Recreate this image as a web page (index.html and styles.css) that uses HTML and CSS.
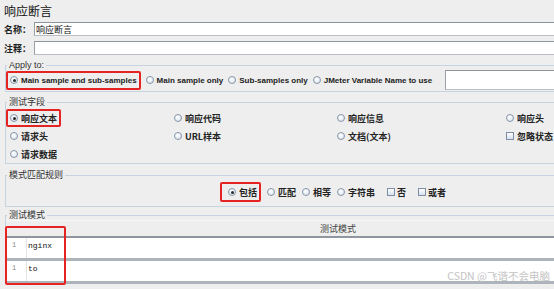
FILE: index.html
```html
<!DOCTYPE html>
<html lang="zh">
<head>
<meta charset="utf-8">
<link rel="stylesheet" href="styles.css">
</head>
<body>
<div class="panel">
  <div class="title">响应断言</div>
  <div class="field first"><span class="flabel">名称：</span><div class="input"><span class="itext">响应断言</span></div></div>
  <div class="field second"><span class="flabel">注释：</span><div class="input"></div></div>

  <fieldset class="group g-apply">
    <legend>Apply to:</legend>
    <div class="apply-row">
      <span class="hl hl-apply"><span class="radio on"></span><span class="lbl en">Main sample and sub-samples</span></span>
      <span class="opt"><span class="radio"></span><span class="lbl en">Main sample only</span></span>
      <span class="opt"><span class="radio"></span><span class="lbl en">Sub-samples only</span></span>
      <span class="opt"><span class="radio"></span><span class="lbl en">JMeter Variable Name to use</span></span>
      <div class="input var"></div>
    </div>
  </fieldset>

  <fieldset class="group g-field">
    <legend>测试字段</legend>
    <div class="field-grid">
      <div class="cell c1"><span class="hl hl-field"><span class="radio on"></span><span class="lbl">响应文本</span></span></div>
      <div class="cell"><span class="radio"></span><span class="lbl">响应代码</span></div>
      <div class="cell"><span class="radio"></span><span class="lbl">响应信息</span></div>
      <div class="cell"><span class="radio"></span><span class="lbl">响应头</span></div>
      <div class="cell c1p"><span class="radio"></span><span class="lbl">请求头</span></div>
      <div class="cell"><span class="radio"></span><span class="lbl">URL样本</span></div>
      <div class="cell"><span class="radio"></span><span class="lbl">文档(文本)</span></div>
      <div class="cell"><span class="check"></span><span class="lbl">忽略状态</span></div>
      <div class="cell c1p"><span class="radio"></span><span class="lbl">请求数据</span></div>
    </div>
  </fieldset>

  <fieldset class="group g-rule">
    <legend>模式匹配规则</legend>
    <div class="rule-row">
      <span class="hl hl-rule"><span class="radio on"></span><span class="lbl">包括</span></span>
      <span class="opt"><span class="radio"></span><span class="lbl">匹配</span></span>
      <span class="opt"><span class="radio"></span><span class="lbl">相等</span></span>
      <span class="opt"><span class="radio"></span><span class="lbl">字符串</span></span>
      <span class="opt ck"><span class="check"></span><span class="lbl">否</span></span>
      <span class="opt ck"><span class="check"></span><span class="lbl">或者</span></span>
    </div>
  </fieldset>

  <fieldset class="group g-pattern">
    <legend>测试模式</legend>
    <div class="table">
      <div class="thead">测试模式</div>
      <div class="trow"><span class="gutter">1</span><span class="code">nginx</span></div>
      <div class="trow"><span class="gutter">1</span><span class="code">to</span></div>
      <div class="hl-rows"></div>
    </div>
  </fieldset>
</div>
<div class="watermark">CSDN @飞谐不会电脑</div>
</body>
</html>
```

FILE: styles.css
```css
html, body {
  margin: 0;
  padding: 0;
  overflow: hidden;
}
body {
  position: relative;
  width: 554px;
  height: 289px;
  background: #eeeeee;
  font-family: "Liberation Sans", "Noto Sans CJK SC", sans-serif;
  color: #222;
}
.panel {
  width: 640px;
  padding: 3px 0 0 4px;
}
.title {
  font-family: "Noto Sans CJK SC", sans-serif;
  font-size: 12px;
  line-height: 16px;
  height: 16px;
  color: #111;
}
.field {
  display: flex;
  align-items: center;
  height: 14px;
}
.field.first { margin-top: 3px; }
.field.second { margin-top: 5px; }
.flabel {
  width: 30px;
  font-family: "Noto Sans CJK SC", sans-serif;
  font-size: 9px;
  font-weight: bold;
  color: #222;
}
.input {
  flex: 1;
  height: 14px;
  box-sizing: border-box;
  background: #fff;
  border: 1px solid #b9bec4;
  border-top-color: #8d949b;
  border-left-color: #9aa1a8;
  display: flex;
  align-items: center;
}
.itext {
  font-family: "Noto Sans CJK SC", sans-serif;
  font-size: 9px;
  padding-left: 1px;
  color: #111;
}
.group {
  margin: 0 0 0 1px;
  padding: 0;
  border: 1px solid #c6d4e2;
  min-width: 0;
}
.group legend {
  font-family: "Liberation Sans", "Noto Sans CJK SC", sans-serif;
  font-size: 9px;
  line-height: 10px;
  padding: 0 2px;
  margin-left: 1px;
  color: #333;
}
.g-apply { margin-top: 5px; padding-bottom: 1px; }
.g-field { margin-top: 5px; padding: 2px 0 0 0; }
.g-rule { margin-top: 6px; padding: 2px 0 4px 0; }
.g-pattern { margin-top: 3px; border-bottom: none; }

.radio {
  display: inline-block;
  flex: none;
  width: 6px;
  height: 6px;
  border: 1px solid #8796aa;
  border-radius: 50%;
  background: radial-gradient(circle at 40% 35%, #ffffff 0%, #e9eef4 55%, #cdd6e1 100%);
  position: relative;
}
.radio.on::after {
  content: "";
  position: absolute;
  left: 1.5px;
  top: 1.5px;
  width: 3px;
  height: 3px;
  border-radius: 50%;
  background: #2a2a2a;
}
.check {
  display: inline-block;
  flex: none;
  width: 6px;
  height: 6px;
  border: 1px solid #7f8fa3;
  background: linear-gradient(#ffffff, #d6e0ec);
}
.lbl {
  font-family: "Noto Sans CJK SC", sans-serif;
  font-size: 9px;
  font-weight: bold;
  color: #222;
  white-space: nowrap;
}
.lbl.en {
  font-family: "Liberation Sans", sans-serif;
  font-size: 8px;
}
.hl {
  display: inline-flex;
  align-items: center;
  box-sizing: border-box;
  border: 2px solid #e62323;
  border-radius: 2px;
}
.apply-row {
  display: flex;
  align-items: center;
  height: 20px;
}
.hl-apply {
  height: 19px;
  padding: 0 2px 0 2px;
  gap: 3px;
}
.opt {
  display: inline-flex;
  align-items: center;
  gap: 3px;
  margin-left: 5px;
}
.apply-row .opt:first-of-type { margin-left: 6px; }
.input.var {
  height: 20px;
  margin-left: 13px;
}
.field-grid {
  display: grid;
  grid-template-columns: 164px 163px 169px 200px;
  grid-auto-rows: 18px;
}
.cell {
  display: flex;
  align-items: center;
  gap: 3px;
  padding-left: 4px;
}
.cell.c1 { padding-left: 0; }
.hl-field {
  height: 18px;
  padding: 0 2px;
  gap: 3px;
}
.rule-row {
  display: flex;
  align-items: center;
  height: 20px;
  padding-left: 214px;
}
.hl-rule {
  height: 20px;
  padding: 0 2px 0 6px;
  gap: 3px;
}
.rule-row .opt { margin-left: 6px; }
.rule-row .opt.ck { margin-left: 12px; gap: 2px; }
.table {
  position: relative;
}
.thead {
  height: 15px;
  line-height: 15px;
  border-top: 1px solid #f8f8f8;
  border-bottom: 2px solid #8f969e;
  padding-left: 314px;
  font-family: "Noto Sans CJK SC", sans-serif;
  font-size: 9px;
  color: #444;
}
.trow {
  display: flex;
  height: 20px;
  background: #fff;
  border-bottom: 3px solid #adb4bb;
}
.gutter {
  width: 21px;
  border-right: 1px solid #e4e4e4;
  font-family: "Liberation Mono", monospace;
  font-size: 7px;
  color: #888;
  padding-left: 6px;
  box-sizing: border-box;
  padding-top: 3px;
}
.code {
  font-family: "Liberation Mono", monospace;
  font-size: 8px;
  color: #111;
  padding-left: 1px;
  padding-top: 3px;
}
.hl-rows {
  position: absolute;
  left: -1px;
  top: 6px;
  width: 61px;
  height: 59px;
  box-sizing: border-box;
  border: 2px solid #e62323;
  border-radius: 2px;
}
.watermark {
  position: absolute;
  right: 4px;
  top: 268px;
  font-family: "Noto Sans CJK SC", sans-serif;
  font-size: 10.5px;
  color: #c4c4c4;
}
```
